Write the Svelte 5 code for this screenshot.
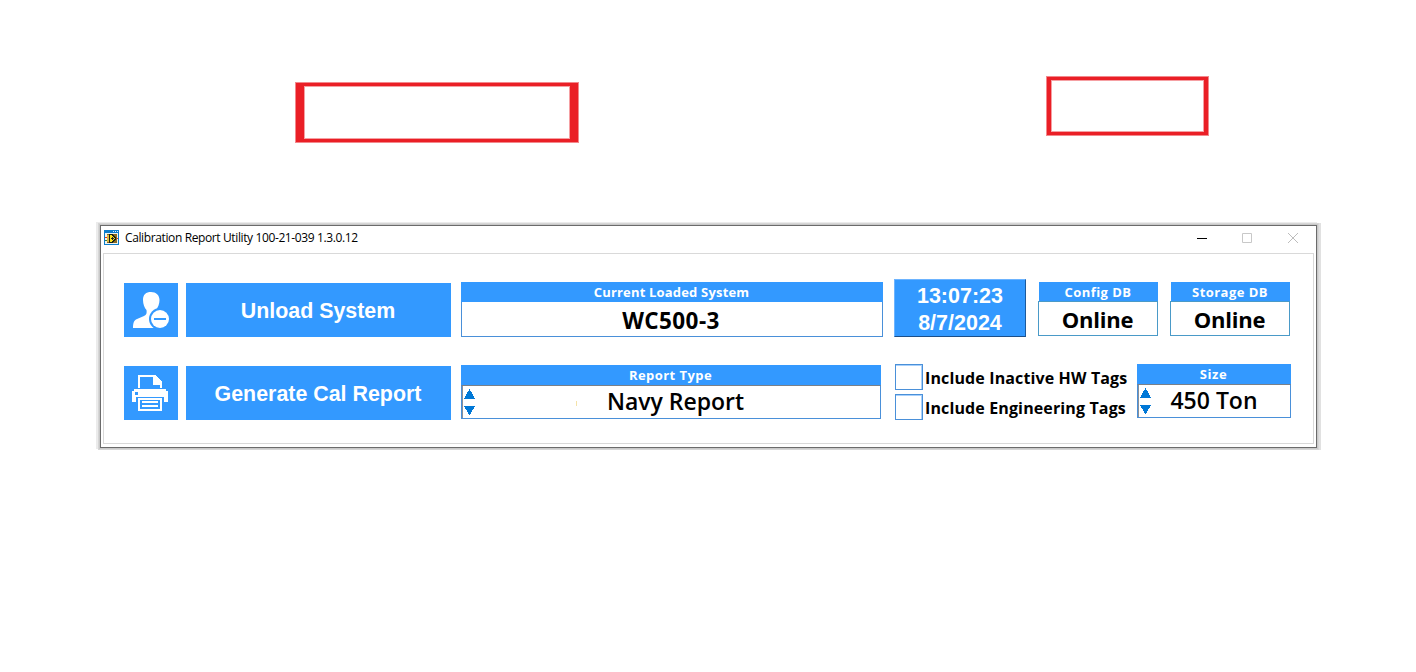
<script>
  const time = '13:07:23';
  const date = '8/7/2024';
  let inactive = $state(false);
  let engineering = $state(false);
</script>

{#snippet spinner()}
  <svg class="spinner" width="12" height="28" viewBox="0 0 12 28" shape-rendering="crispEdges">
    <path d="M5.500 0 L11 9.500 H0 Z M0 17 H11 L5.500 26.500 Z" fill="#0078d7" />
  </svg>
{/snippet}

<main>
  <div class="marks">
    <div class="mark wide"></div>
    <div class="mark narrow"></div>
  </div>

  <section class="window">
    <header class="titlebar">
      <svg class="appicon" width="15" height="15" viewBox="0 0 15 15" shape-rendering="crispEdges">
        <path d="M0 0H15V15H0Z" fill="#0b7ccc" />
        <path d="M9 1h1v1H9zM11 1h1v1h-1zM13 1h1v1h-1z" fill="#d9efff" />
        <path d="M1 3H14V14H1Z" fill="#eef3ee" />
        <path d="M1 7h2v1H1zM12 8h2v1h-2z" fill="#e52b20" />
        <path d="M1 10h2v1H1z" fill="#2f7a44" />
        <path d="M3 4H13V13H3Z" fill="#8a6a20" />
        <path d="M3 5H6V12H3Z" fill="#e2b83a" />
        <path d="M5 4H9V5H10V6H11V7H12V10H11V11H10V12H9V13H5Z" fill="#17201c" />
        <path d="M6 5H8V6H9V7H10V8H11V9H10V10H9V11H8V12H6Z" fill="#f7e21d" />
        <path d="M7 8h3v1H7zM8 7h1v3H8z" fill="#222" />
      </svg>
      <span class="title">Calibration Report Utility 100-21-039 1.3.0.12</span>
      <svg class="controls" width="104" height="12" viewBox="0 0 104 12" fill="none">
        <path d="M0 6.500H10" stroke="#000" />
        <path d="M45.500 1.500H54.500V10.500H45.500Z" stroke="#c8c8c8" />
        <path d="M91 1L101 11M101 1L91 11" stroke="#bdbdbd" />
      </svg>
    </header>

    <div class="client">
      <div class="row">
        <button class="tile" aria-label="Unload System">
          <svg width="54" height="54" viewBox="0 0 54 54">
            <path d="M19 17C19 11.500 22 9 27 9C32 9 35.500 12 35.500 17C35.500 21 34 24 32 27V31L38 34V45H9C9 40 10 37 13 36L20 33C22.500 32 23 30 22.500 27C20.500 25 19 21 19 17Z" fill="#fff" />
            <circle cx="36" cy="36" r="11" fill="#39f" />
            <circle cx="36" cy="36" r="9" fill="#fff" />
            <path d="M30 36H42" stroke="#39f" stroke-width="2" />
          </svg>
        </button>
        <button class="action"><span>Unload System</span></button>
        <div class="panel system">
          <div class="head"><span class="h-system">Current Loaded System</span></div>
          <div class="body"><span class="v-system">WC500-3</span></div>
        </div>
        <div class="clock"><span>{time}</span><span>{date}</span></div>
        <div class="panel db config">
          <div class="head"><span>Config DB</span></div>
          <div class="body"><span class="v-online">Online</span></div>
        </div>
        <div class="panel db storage">
          <div class="head"><span>Storage DB</span></div>
          <div class="body"><span class="v-online">Online</span></div>
        </div>
      </div>

      <div class="row second">
        <button class="tile" aria-label="Generate Cal Report">
          <svg width="54" height="54" viewBox="0 0 54 54" shape-rendering="crispEdges">
            <path d="M14 22V9H31L38 16V22H36V19H29V11H16V22Z" fill="#fff" />
            <path d="M10 23H42V25H44V36H40V33H12V36H8V25H10Z" fill="#fff" />
            <path d="M11 26h3v3h-3z" fill="#39f" />
            <path d="M12 31H40V36H12Z" fill="#39f" />
            <path d="M14 32H38V45H14Z" fill="#fff" />
            <path d="M16 34H36V43H16Z" fill="#39f" />
            <path d="M18 35H34V37H18ZM18 39H34V41H18Z" fill="#fff" />
          </svg>
        </button>
        <button class="action"><span>Generate Cal Report</span></button>
        <div class="panel report">
          <div class="head"><span>Report Type</span></div>
          <div class="body sunken">{@render spinner()}<i class="caret"></i><span class="v-report">Navy Report</span></div>
        </div>
        <div class="checks">
          <label><input type="checkbox" bind:checked={inactive} /><span>Include Inactive HW Tags</span></label>
          <label><input type="checkbox" bind:checked={engineering} /><span>Include Engineering Tags</span></label>
        </div>
        <div class="panel size">
          <div class="head"><span class="h-size">Size</span></div>
          <div class="body sunken">{@render spinner()}<span class="v-size">450 Ton</span></div>
        </div>
      </div>
    </div>
  </section>
</main>

<style>
  :global(body) { background: #fff; }
  main {
    width: 1416px;
    height: 672px;
    overflow: hidden;
    box-sizing: border-box;
    font-family: "Open Sans", "Noto Sans", sans-serif;
    color: #000;
  }
  main * { box-sizing: border-box; }
  span { white-space: nowrap; }
  .marks {
    display: flex;
    justify-content: space-between;
    align-items: flex-start;
    height: 225px;
    padding: 76px 207px 0 295px;
  }
  .mark { border: solid #ea1f26; outline: 1px solid #f3888c; outline-offset: -1px; }
  .wide { width: 284px; height: 61px; margin-top: 6px; border-width: 4px 9px; box-shadow: inset 0 0 0 1px #f5a0a3; }
  .narrow { width: 163px; height: 60px; border-width: 4px 5px; box-shadow: inset 0 0 0 1px #f5a0a3; }
  .window {
    width: 1217px;
    height: 223px;
    margin-left: 100px;
    padding: 0 2px;
    border: 1px solid #6b6b6b;
    background: #fff;
    box-shadow: 0 0 0 1px #c9c9c9, 0 0 0 2px #d6d6d6, 2px 0 0 2px #e1e1e1, -2px -1px 0 2px #ebebeb;
  }
  .titlebar { display: flex; align-items: center; height: 27px; padding: 0 13px 0 1px; }
  .appicon { flex: none; margin-top: -4px; }
  .title { margin: -4px auto 0 6px; font-size: 12px; letter-spacing: -0.38px; }
  .controls { flex: none; margin-top: -4px; }
  .client { height: 191px; border: 1px solid #d9d9d9; padding: 25px 0 0 20px; }
  .row { display: flex; align-items: flex-start; height: 83px; }
  button { border: 0; padding: 2px 1px 0 0; background: #39f; color: #fff; font: bold 21.4px "Liberation Sans", Arial, sans-serif; }
  .tile { width: 54px; height: 54px; margin-top: 4px; padding: 0; flex: none; }
  .tile svg { display: block; }
  .action { width: 265px; height: 54px; margin: 4px 10px 0 8px; flex: none; }
  .panel { display: flex; flex-direction: column; flex: none; margin-top: 3px; }
  .head {
    flex: none;
    height: 20px;
    padding-right: 1px;
    background: #39f;
    color: #fff;
    font-size: 13px;
    font-weight: 700;
    line-height: 20px;
    letter-spacing: 0.45px;
    text-align: center;
  }
  .h-system { letter-spacing: 0.18px; }
  .body {
    flex: 1;
    min-height: 0;
    display: flex;
    align-items: center;
    justify-content: center;
    border: 1px solid #4a90d9;
    border-top: 0;
    font-size: 22px;
    font-weight: 700;
    line-height: 30px;
  }
  .v-system { font-size: 22.5px; letter-spacing: 0.4px; padding: 4px 2px 0 0; }
  .v-online { letter-spacing: -0.25px; padding-right: 1px; }
  .system { width: 422px; height: 55px; }
  .clock {
    flex: none;
    display: flex;
    flex-direction: column;
    align-items: center;
    width: 132px;
    height: 58px;
    margin: 0 12px 0 11px;
    padding-top: 3px;
    background: #39f;
    border: 1px solid #6db4ff;
    border-right-color: #1c5a9c;
    border-bottom: 1px solid #1c4f88;
    color: #fff;
    font: bold 21.500px/27px "Liberation Sans", Arial, sans-serif;
  }
  .db { width: 120px; height: 54px; margin-right: 12px; }
  .db .head { margin-left: 1px; height: 19px; }
  .db .body { border: 1px solid #4a9ac8; }
  .second .panel { height: 54px; }
  .report { width: 420px; }
  .sunken { position: relative; border-top: 1px solid #7a8088; box-shadow: inset 1px 0 0 #8a9098; }
  .spinner { position: absolute; left: 2px; top: 3px; }
  .caret { position: absolute; left: 114px; top: 15px; width: 1px; height: 5px; background: #f5e3a8; }
  .checks { flex: none; display: flex; flex-direction: column; gap: 4px; margin: 2px 0 0 14px; width: 242px; }
  label { display: flex; align-items: center; height: 26px; font-size: 16px; font-weight: 700; letter-spacing: 0.13px; }
  label span { padding-top: 2px; }
  input {
    appearance: none;
    width: 28px;
    height: 26px;
    margin: 0 2px 0 0;
    flex: none;
    background: #fff;
    border: 1px solid #4a90d9;
    box-shadow: inset 0 1px 0 #a8d0fb, inset -1px 0 0 #a8d0fb;
  }
  .size { width: 154px; }
  .second .size { margin-top: 2px; }
  .h-size { letter-spacing: 0.6px; }
  .v-report, .v-size { font-weight: 600; font-size: 23px; padding-bottom: 2px; }
  .v-report { padding-left: 9px; }
</style>
